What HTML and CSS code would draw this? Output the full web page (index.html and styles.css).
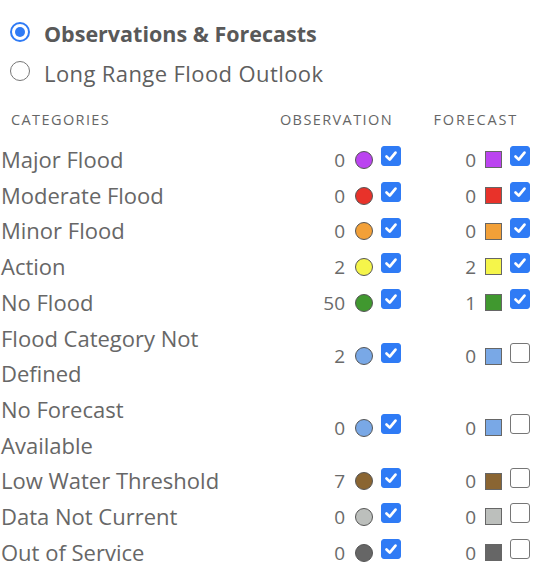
FILE: index.html
```html
<!DOCTYPE html>
<html lang="en">
<head>
<meta charset="utf-8">
<title>Flood Legend</title>
<link rel="stylesheet" href="styles.css">
</head>
<body>
<div class="panel">
  <div class="modes">
    <label class="mode">
      <span class="radio checked"></span>
      <span class="mode-text strong">Observations &amp; Forecasts</span>
    </label>
    <label class="mode">
      <span class="radio"></span>
      <span class="mode-text">Long Range Flood Outlook</span>
    </label>
  </div>

  <div class="legend">
    <div class="head head-cat">Categories</div>
    <div class="head head-obs">Observation</div>
    <div class="head head-fc">Forecast</div>

    <div class="label">Major Flood</div>
    <div class="cell obs"><span class="num">0</span><span class="dot c-major"></span><span class="box on"><svg viewBox="0 0 20 20"><path d="M5 10.5 L8.6 14 L15 6.2"/></svg></span></div>
    <div class="cell fc"><span class="num">0</span><span class="sq c-major"></span><span class="box on"><svg viewBox="0 0 20 20"><path d="M5 10.5 L8.6 14 L15 6.2"/></svg></span></div>

    <div class="label">Moderate Flood</div>
    <div class="cell obs"><span class="num">0</span><span class="dot c-moderate"></span><span class="box on"><svg viewBox="0 0 20 20"><path d="M5 10.5 L8.6 14 L15 6.2"/></svg></span></div>
    <div class="cell fc"><span class="num">0</span><span class="sq c-moderate"></span><span class="box on"><svg viewBox="0 0 20 20"><path d="M5 10.5 L8.6 14 L15 6.2"/></svg></span></div>

    <div class="label">Minor Flood</div>
    <div class="cell obs"><span class="num">0</span><span class="dot c-minor"></span><span class="box on"><svg viewBox="0 0 20 20"><path d="M5 10.5 L8.6 14 L15 6.2"/></svg></span></div>
    <div class="cell fc"><span class="num">0</span><span class="sq c-minor"></span><span class="box on"><svg viewBox="0 0 20 20"><path d="M5 10.5 L8.6 14 L15 6.2"/></svg></span></div>

    <div class="label">Action</div>
    <div class="cell obs"><span class="num">2</span><span class="dot c-action"></span><span class="box on"><svg viewBox="0 0 20 20"><path d="M5 10.5 L8.6 14 L15 6.2"/></svg></span></div>
    <div class="cell fc"><span class="num">2</span><span class="sq c-action"></span><span class="box on"><svg viewBox="0 0 20 20"><path d="M5 10.5 L8.6 14 L15 6.2"/></svg></span></div>

    <div class="label">No Flood</div>
    <div class="cell obs"><span class="num">50</span><span class="dot c-noflood"></span><span class="box on"><svg viewBox="0 0 20 20"><path d="M5 10.5 L8.6 14 L15 6.2"/></svg></span></div>
    <div class="cell fc"><span class="num">1</span><span class="sq c-noflood"></span><span class="box on"><svg viewBox="0 0 20 20"><path d="M5 10.5 L8.6 14 L15 6.2"/></svg></span></div>

    <div class="label">Flood Category Not<br>Defined</div>
    <div class="cell obs"><span class="num">2</span><span class="dot c-undef"></span><span class="box on"><svg viewBox="0 0 20 20"><path d="M5 10.5 L8.6 14 L15 6.2"/></svg></span></div>
    <div class="cell fc"><span class="num">0</span><span class="sq c-undef"></span><span class="box"></span></div>

    <div class="label">No Forecast<br>Available</div>
    <div class="cell obs"><span class="num">0</span><span class="dot c-undef"></span><span class="box on"><svg viewBox="0 0 20 20"><path d="M5 10.5 L8.6 14 L15 6.2"/></svg></span></div>
    <div class="cell fc"><span class="num">0</span><span class="sq c-undef"></span><span class="box"></span></div>

    <div class="label">Low Water Threshold</div>
    <div class="cell obs"><span class="num">7</span><span class="dot c-low"></span><span class="box on"><svg viewBox="0 0 20 20"><path d="M5 10.5 L8.6 14 L15 6.2"/></svg></span></div>
    <div class="cell fc"><span class="num">0</span><span class="sq c-low"></span><span class="box"></span></div>

    <div class="label">Data Not Current</div>
    <div class="cell obs"><span class="num">0</span><span class="dot c-old"></span><span class="box on"><svg viewBox="0 0 20 20"><path d="M5 10.5 L8.6 14 L15 6.2"/></svg></span></div>
    <div class="cell fc"><span class="num">0</span><span class="sq c-old"></span><span class="box"></span></div>

    <div class="label">Out of Service</div>
    <div class="cell obs"><span class="num">0</span><span class="dot c-oos"></span><span class="box on"><svg viewBox="0 0 20 20"><path d="M5 10.5 L8.6 14 L15 6.2"/></svg></span></div>
    <div class="cell fc"><span class="num">0</span><span class="sq c-oos"></span><span class="box"></span></div>
  </div>
</div>
</body>
</html>
```

FILE: styles.css
```css
* { box-sizing: border-box; }

html, body {
  margin: 0;
  padding: 0;
  background: #ffffff;
}

body {
  font-family: "Open Sans", "Liberation Sans", sans-serif;
  color: #666666;
}

.panel {
  width: 538px;
  padding: 14px 8px 0 0;
}

.modes {
  padding-left: 10px;
}

.mode {
  display: flex;
  align-items: center;
  height: 39px;
}

.radio {
  width: 20px;
  height: 20px;
  border-radius: 50%;
  border: 1.5px solid #767676;
  background: #fff;
  margin-right: 14px;
  margin-bottom: 4px;
  flex: none;
  display: flex;
  align-items: center;
  justify-content: center;
}

.radio.checked {
  border: 2px solid #2f7bf5;
}

.radio.checked::after {
  content: "";
  width: 10px;
  height: 10px;
  border-radius: 50%;
  background: #2f7bf5;
}

.mode-text {
  font-size: 22px;
  color: #5f5f5f;
  letter-spacing: 0.4px;
}

.mode-text.strong {
  font-size: 21.5px;
  font-weight: 700;
  color: #595959;
  letter-spacing: 0;
}

.legend {
  display: grid;
  grid-template-columns: 230px 1fr 129px;
  align-items: center;
  margin-top: 16px;
}

.head {
  font-size: 14.5px;
  text-transform: uppercase;
  letter-spacing: 1.4px;
  line-height: 24px;
  height: 34px;
  color: #666;
  white-space: nowrap;
}

.head-cat { padding-left: 11px; }
.head-obs { text-align: right; padding-right: 8px; }
.head-fc { text-align: right; padding-right: 12px; letter-spacing: 1.8px; }

.label {
  font-size: 22px;
  line-height: 35.7px;
  padding-left: 1px;
  color: #676767;
}

.cell {
  display: flex;
  align-items: center;
  justify-content: flex-end;
}

.num {
  font-size: 19px;
  color: #6a6a6a;
  line-height: 20px;
  font-weight: 400;
}

.dot {
  width: 18px;
  height: 18px;
  border-radius: 50%;
  border: 1px solid #555;
  margin-left: 10px;
  flex: none;
}

.sq {
  width: 17px;
  height: 17px;
  border: 1px solid #666;
  margin-left: 9px;
  flex: none;
}

.box {
  width: 20px;
  height: 20px;
  border-radius: 3px;
  border: 1.5px solid #767676;
  background: #fff;
  margin-left: 8px;
  margin-bottom: 7px;
  flex: none;
  display: flex;
  align-items: center;
  justify-content: center;
}

.box.on {
  background: #2f7bf5;
  border-color: #2f7bf5;
}

.box svg {
  width: 18px;
  height: 18px;
  fill: none;
  stroke: #ffffff;
  stroke-width: 3;
  stroke-linecap: round;
  stroke-linejoin: round;
}

.c-major { background: #bb44f0; }
.c-moderate { background: #e8322a; }
.c-minor { background: #f2a038; }
.c-action { background: #f5f54a; }
.c-noflood { background: #40982f; }
.c-undef { background: #79a8e6; }
.c-low { background: #8a6532; }
.c-old { background: #bcbfbc; }
.c-oos { background: #666666; }
```
